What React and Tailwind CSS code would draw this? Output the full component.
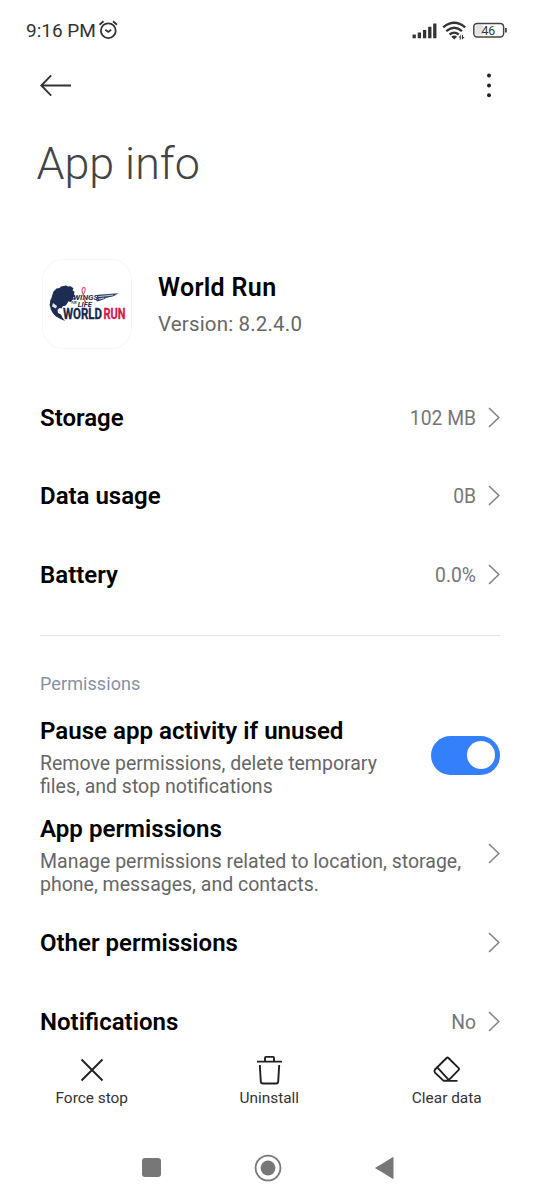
import React from "react";

function Chevron() {
  return (
    <svg className="ml-3 h-[22px] w-3 shrink-0" viewBox="0 0 12 22" fill="none" stroke="#858585" strokeWidth="1.6">
      <path d="M1 1 10.8 10.5 1 20" />
    </svg>
  );
}

function Row({ title, value }) {
  return (
    <div className="flex h-[78.5px] shrink-0 items-center">
      <span className="text-[24px] leading-7 font-semibold text-black">{title}</span>
      <span className="ml-auto pt-[1.5px] text-[19.3px] leading-6 text-[#767676]">{value}</span>
      <Chevron />
    </div>
  );
}

function StatusBar() {
  return (
    <div className="flex h-[60px] shrink-0 items-center pl-[26px] text-[#333]">
      <span className="w-[72px] pt-[2px] text-[19px] leading-6 whitespace-nowrap">9:16 PM</span>
      <svg className="h-5 w-5" viewBox="0 0 20 20" fill="none" stroke="#333" strokeWidth="1.8">
        <circle cx="10.3" cy="10.7" r="7.4" />
        <path d="M7.3 9.8 10.2 12l3-2.2M1.5 4.7l4-3.4M15 1.3l4 3.4" />
      </svg>
      <svg className="ml-[293px] h-6 w-[100px]" viewBox="0 0 100 24" fill="none">
        <g stroke="#333" strokeWidth="3.3">
          <path d="M3.2 16.5v3.7M8.4 14.4v5.8M13.6 11.9v8.3M18.8 8.700v11.500M23.8 5.500v14.700" />
        </g>
        <g stroke="#333" strokeWidth="2.3">
          <path d="M32.2 9.300Q43.2.3 54.200 9.300M35.300 13.100Q43.200 6.300 51 13.100M38.600 16.500q4.600-3.800 9.200 0" />
        </g>
        <path d="M40.200 18.700q3-2.600 6 0l-3 2.800zM47.600 19.500l2.200-2.700v4.700h-1.100v-2zM50.900 16.800h1.100v2.300h1.600l-2.700 2.700z" fill="#333" />
        <rect x="62.8" y="5.4" width="29.8" height="13.6" rx="3.4" stroke="#444" strokeWidth="1.5" />
        <rect x="64.4" y="7" width="8" height="10.4" rx="2" fill="#e2e2e2" />
        <path d="M94.9 10v4.4" stroke="#444" strokeWidth="1.8" />
        <text x="77.3" y="16.6" textAnchor="middle" fill="#333" fontSize="12.3">46</text>
      </svg>
    </div>
  );
}

function Logo() {
  return (
    <svg className="h-[90px] w-[90px] shrink-0" viewBox="0 0 90 90">
      <rect x=".5" y=".5" width="89" height="89" rx="20" fill="#fff" stroke="#f5f5f5" />
      <path d="M10 37l1.500-4.500 3-3 3-.5 1.500-1.500 5-1 2 1 2.500-.3 3 2-1 2 2 1.500-.5 2 1 3-2 .5 1 2-2 1-1 2-2.500-1-1.500 2.500-1.500 2-2.500.3-1.500 2.500-2-.5-2 2 .5 3 3 1.500.5 3-2 .5-4-2-3-4-1-4-2-3z" fill="#1c2c52" />
      <path d="M9 39q-5 16 14 23-3-4-4-6l-3-1-2-4-3-3-1-4z" fill="#1c2c52" />
      <path d="M11 44l4 3-1 2.500-4-2z" fill="#dfe4ec" />
      <path d="M56 35.700l20.500-1.500-5 3-9 2 1 .6-8 2.800-1.500-.8 3-2.300h-3z" fill="#304366" />
      <path d="M56 37.600l15-1.500M57 40l5-1" stroke="#e8ecf2" strokeWidth=".8" />
      <g fill="#1c2c52" fontWeight="700" fontStyle="italic">
        <text x="31" y="41.400" fontSize="8" textLength="25.500" lengthAdjust="spacingAndGlyphs">WINGS</text>
        <text x="35.700" y="47.600" fontSize="7.200" textLength="14" lengthAdjust="spacingAndGlyphs">LIFE</text>
        <text x="29.500" y="44.500" fontSize="2.800">FOR</text>
      </g>
      <path d="M43 43l-3-11q.5-5 3-3 1 2-2 7l2.500 7" fill="none" stroke="#dc5a75" strokeWidth="1.100" />
      <g fontWeight="700" fontSize="15.5" strokeWidth=".35">
        <text x="21" y="59.500" fill="#17294e" stroke="#17294e" textLength="39" lengthAdjust="spacingAndGlyphs">WORLD</text>
        <text x="61.500" y="59.500" fill="#d3194d" stroke="#d3194d" textLength="22" lengthAdjust="spacingAndGlyphs">RUN</text>
      </g>
    </svg>
  );
}

function Action({ label, children }) {
  return (
    <div className="flex w-[177.5px] flex-col items-center">
      <svg className="h-8 w-8" viewBox="0 0 32 32" fill="none" stroke="#202020" strokeWidth="1.9">
        {children}
      </svg>
      <span className="mt-[2px] text-[15.4px] leading-5 whitespace-nowrap text-[#333]">{label}</span>
    </div>
  );
}

export default function App() {
  return (
    <div className="flex h-[1200px] w-[540px] flex-col overflow-hidden bg-white font-['Roboto',sans-serif]">
      <StatusBar />
      <header className="flex h-[50px] shrink-0 items-center justify-between pr-[45px] pl-[39px]">
        <svg className="h-6 w-8" viewBox="0 0 32 24" fill="none" stroke="#333" strokeWidth="1.9">
          <path d="M32 12.5H2.5M12.2 2.4 2.3 12.5l9.9 10.1" />
        </svg>
        <svg className="h-7 w-3" viewBox="0 0 12 28" fill="#222">
          <circle cx="6" cy="4.5" r="2" />
          <circle cx="6" cy="14.4" r="2" />
          <circle cx="6" cy="24.3" r="2" />
        </svg>
      </header>
      <h1 className="h-[149px] shrink-0 pt-[29px] pl-[36.5px] text-[44.8px] leading-[50px] font-light text-[#444]">App info</h1>
      <section className="flex h-[90px] shrink-0 items-center pl-[42px]">
        <Logo />
        <div className="ml-[26px] pt-[4px]">
          <h2 className="text-[25px] leading-9 font-semibold tracking-[0.35px] text-black">World Run</h2>
          <p className="text-[20.5px] leading-9 tracking-[0.17px] text-[#676767]">Version: 8.2.4.0</p>
        </div>
      </section>
      <main className="flex h-[701px] shrink-0 flex-col overflow-hidden px-10 pt-[29.5px]">
        <Row title="Storage" value="102 MB" />
        <Row title="Data usage" value="0B" />
        <Row title="Battery" value="0.0%" />
        <div className="mt-[21px] h-px shrink-0 bg-[#e4e4e4]" />
        <div className="mt-[36px] text-[18px] leading-6 tracking-[0.08px] text-[#8790a5]">Permissions</div>
        <div className="mt-[19.5px] flex h-[81px] shrink-0">
          <div className="min-w-0 flex-1">
            <h3 className="text-[24.1px] leading-[31px] font-semibold text-black">Pause app activity if unused</h3>
            <p className="mt-[5px] text-[19.5px] leading-[23px] whitespace-nowrap text-[#666]">Remove permissions, delete temporary<br />files, and stop notifications</p>
          </div>
          <div className="mt-5 flex h-[39px] w-[69px] items-center justify-end rounded-full bg-[#347ffb] pr-[5px]">
            <div className="h-7 w-7 rounded-full bg-white" />
          </div>
        </div>
        <div className="mt-[17px] flex h-[81px] shrink-0">
          <div className="min-w-0 flex-1">
            <h3 className="text-[24.1px] leading-[31px] font-semibold text-black">App permissions</h3>
            <p className="mt-[5px] text-[19.5px] leading-[23px] whitespace-nowrap text-[#666]">Manage permissions related to location, storage,<br />phone, messages, and contacts.</p>
          </div>
          <div className="mt-[29px]"><Chevron /></div>
        </div>
        <div className="mt-[9.5px] flex shrink-0 flex-col">
          <Row title="Other permissions" />
          <Row title="Notifications" value="No" />
        </div>
      </main>
      <footer className="flex h-[85px] shrink-0 pt-1 pl-[3px]">
        <Action label="Force stop"><path d="m5.5 5.5 21 21m0-21-21 21" /></Action>
        <Action label="Uninstall">
          <path d="M4 7.600h25M12 7.600V4q0-1.100 1-1.100h7q1 0 1 1.100v3.600M6.800 11l1 16.500q.1 2 2 2h13.400q1.900 0 2-2l1-16.500" />
        </Action>
        <Action label="Clear data">
          <path d="M4 15.500 15.600 4q.9-.9 1.800 0l10.300 10.100q.9.900 0 1.800L17.200 26.600h-4.800l-8.400-8q-1.200-1.500 0-3.100zM6.500 13.700l11 12M12.500 26.900H26.500" />
        </Action>
      </footer>
      <nav className="flex h-[65px] shrink-0 items-center pl-[142px]">
        <div className="h-[19px] w-[19px] rounded-[3px] bg-[#777]" />
        <svg className="ml-[93px] h-7 w-7" viewBox="0 0 28 28"><circle cx="14" cy="14" r="12.4" fill="none" stroke="#777" strokeWidth="1.8" /><circle cx="14" cy="14" r="7.4" fill="#777" /></svg>
        <svg className="ml-[93px] h-6 w-[19px]" viewBox="0 0 19 24"><path d="M18.500 .8v22.4L0 12z" fill="#777" /></svg>
      </nav>
    </div>
  );
}
